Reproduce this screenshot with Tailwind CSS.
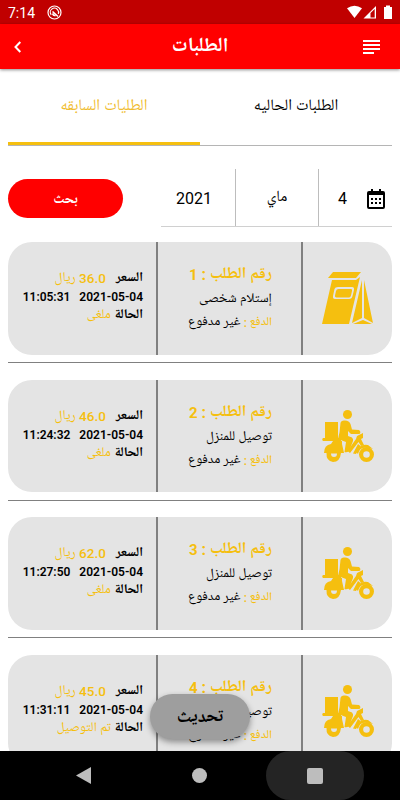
<!DOCTYPE html>
<html lang="ar" dir="rtl">
<head>
    <meta charset="UTF-8">
    <meta name="viewport" content="width=device-width, initial-scale=1.0">
    <title>الطلبات</title>
    <script src="https://cdn.jsdelivr.net/npm/@tailwindcss/browser@4"></script>
</head>
<body class="bg-white text-black font-[Roboto,'Noto_Naskh_Arabic_UI','Noto_Naskh_Arabic','DejaVu_Sans',sans-serif]">
    <div class="relative w-[400px] h-[800px] overflow-hidden flex flex-col">
        <!-- Status bar -->
        <div dir="ltr" class="h-6 shrink-0 bg-[#c00000] text-white flex items-center pl-2 pr-2">
            <span class="text-[14px] leading-6 w-[39px] pt-[2px]">7:14</span>
            <svg class="w-[15px] h-[15px]" viewBox="0 0 15 15" fill="none" stroke="white">
                <circle cx="7.5" cy="7.5" r="6.5" stroke-width="1.2"/>
                <path d="M4.200 9.800A4 4 0 0 1 10.500 4.700A4 4 0 0 1 11.300 9" stroke-width="1.200"/>
                <path d="M5.500 6.500L11 11.500M5.500 8.500Q6 10.500 8.500 10.800" stroke-width="1.600"/>
            </svg>
            <svg class="ml-auto w-[46px] h-[16px]" viewBox="0 0 46 16">
                <path d="M1 4.3Q8.500-.8 16 4.300L8.500 14Z" fill="white"/>
                <path d="M17.500 14.500L30 2V14.500Z" fill="white"/>
                <path d="M24.500 13.500V9L28.700 5V13.500Z" fill="#c00000"/>
                <path d="M38 3h2V1.500h4V3h2v12h-8Z" fill="white"/>
            </svg>
        </div>

        <!-- App bar -->
        <div class="h-[45px] shrink-0 bg-[#ff0000] text-white flex items-center justify-between pr-[20px] pl-[14px] shadow-[0_1px_3px_rgba(0,0,0,0.45)]">
            <svg class="w-[17px] h-[15px] mt-px" viewBox="0 0 17 15" fill="white">
                <path d="M0 0h17v2H0zM0 4h17v2H0zM0 8h17v2H0zM0 12h11v2H0z"/>
            </svg>
            <h1 class="text-[20px] font-bold leading-6 pl-[15px]">الطلبات</h1>
            <svg class="w-[8px] h-[12px] mt-px" viewBox="0 0 8 12" fill="none" stroke="white" stroke-width="2">
                <path d="M6.300 1L1.500 6L6.300 11"/>
            </svg>
        </div>

        <!-- Tabs -->
        <div class="mx-2 h-[77px] shrink-0 flex text-[16px] border-b border-[#b5b5b5]">
            <div class="w-1/2 flex items-center justify-center pb-px">الطلبات الحاليه</div>
            <div class="w-1/2 flex items-center justify-center pt-[2px] text-[#f0bc2e] border-b-[3px] border-[#f5bf0f]">الطليات السابقه</div>
        </div>

        <!-- Date filter -->
        <div class="mx-2 mt-[23px] h-[58px] shrink-0 flex justify-between">
            <div class="w-[231px] flex border-b border-[#d0d0d0] text-[16px]">
                <div class="w-[74px] flex items-center gap-[20px] pr-[7px] pt-[2px] border-l border-[#bdbdbd]">
                    <svg class="w-[18px] h-[20px]" viewBox="0 0 18 20">
                        <path d="M4 0h2v2h6V0h2v2h2q2 0 2 2v14q0 2-2 2H2q-2 0-2-2V4q0-2 2-2h2Z"/>
                        <path d="M2 6h14v12H2Z" fill="white"/>
                        <path d="M4 9h2v2H4zM8 9h2v2H8zM12 9h2v2h-2zM4 13h2v2H4zM8 13h2v2H8zM12 13h2v2h-2z"/>
                    </svg>
                    <span>4</span>
                </div>
                <div class="w-[83px] flex items-center justify-center pt-[3px] text-[15.500px] border-l border-[#bdbdbd]">ماي</div>
                <div class="grow flex items-center justify-center pr-[4px] pt-[2px]"><span class="-ml-1">2021</span></div>
            </div>
            <button class="mt-[10px] pt-[3px] w-[115px] h-[39px] rounded-full bg-[#ff0000] text-white text-[14px] font-bold">بحث</button>
        </div>

        <!-- Orders -->
        <div id="orders" class="mx-2 mt-[15px] grow overflow-hidden"></div>

        <button class="absolute left-[150px] top-[694px] w-[100px] h-[45px] rounded-full bg-[#9e9e9e] pt-[2px] text-[18px] font-bold shadow-[0_3px_6px_rgba(0,0,0,0.4)]">تحديث</button>

        <!-- Navigation bar -->
        <div dir="ltr" class="h-[49px] shrink-0 bg-black flex items-center pl-[76px]">
            <svg class="w-[15px] h-[17px]" viewBox="0 0 15 17" fill="#bdbdbd"><path d="M0 8.500L15 0V17Z"/></svg>
            <div class="ml-[101px] w-[15px] h-[15px] rounded-full bg-[#bdbdbd]"></div>
            <div class="ml-[59px] w-[98px] h-[49px] rounded-full bg-[#242424] flex items-center justify-center">
                <div class="w-4 h-4 rounded-[2px] bg-[#bdbdbd]"></div>
            </div>
        </div>
    </div>

    <script>
        const orders = [
            { id: 1, price: '36.0', time: '11:05:31', type: 'إستلام شخصى', status: 'ملغى', icon: 'bag' },
            { id: 2, price: '46.0', time: '11:24:32', type: 'توصيل للمنزل', status: 'ملغى', icon: 'scooter' },
            { id: 3, price: '62.0', time: '11:27:50', type: 'توصيل للمنزل', status: 'ملغى', icon: 'scooter' },
            { id: 4, price: '45.0', time: '11:31:11', type: 'توصيل للمنزل', status: 'تم التوصيل', icon: 'scooter' }
        ];

        const icons = {
            bag: `
                <svg class="w-[52px] h-[54px]" viewBox="0 0 52 54" fill="#f5bf0f">
                    <path d="M11 1H39L34 7H6Z"/>
                    <path fill-rule="evenodd" d="M10 9H34L38 6L27 53H0ZM16 16Q13 16 12.500 18L11 25Q10.500 28 13 28H27Q30 28 30.500 25L32 19Q32.500 16 30 16ZM16.500 18H29Q30.500 18 30 20L29 24.500Q28.500 26.500 27 26.500H14.500Q12.500 26.500 13 24.500L14 20Q14.500 18 16.500 18Z"/>
                    <path d="M40 9V47L30 52ZM42 9L51 52L42 47ZM41 49L50 53H31Z"/>
                </svg>`,
            scooter: `
                <svg class="w-[52px] h-[52px]" viewBox="0 0 52 52" fill="#f5bf0f">
                    <circle cx="25.500" cy="4.500" r="4.500"/>
                    <path d="M3 12H16V28H19V31H1Q-.5 29.500 1 28H3Z"/>
                    <path d="M18.500 13Q19 10.500 22 10.500Q27 10 28.500 14L30 19.500L37 20Q39.500 22 37.500 24H29L26 21V26L30 27.500Q31.500 29 31 31L27.500 40Q26 43 22.500 42L24 32L16 29Q18 22 18.500 13Z"/>
                    <path d="M11 31H20V34L22 43H19Q18 52 11 52Q4 51 4.500 43H2Q2 35 9 34Z"/>
                    <path d="M9 43.500H15Q15 47 12 47Q9 47 9 43.500Z" fill="#e4e4e4"/>
                    <path d="M35 26L41 23V28L39 29L42 35L39 36L36.500 32L28 43L25.500 41L34 29ZM31 43.500L36 34L38.500 36L34 44Z"/>
                    <path d="M34 42Q38 33 46 35L51 39L47 38Q38 36 36 44Z"/>
                    <circle cx="44.500" cy="44.500" r="5.400" fill="none" stroke="#f5bf0f" stroke-width="4.200"/>
                </svg>`
        };

        document.getElementById('orders').innerHTML = orders.map(order => `
            <div class="h-[137.5px]">
                <div class="h-[112.5px] rounded-[24px] bg-[#e4e4e4] flex overflow-hidden">
                    <div class="w-[89px] flex items-center justify-center pl-[1px]">${icons[order.icon]}</div>
                    <div class="w-[147px] border-x-2 border-[#808080] pr-[29px] pt-[21px] whitespace-nowrap">
                        <div class="h-[24px] leading-6 text-[16px] font-bold text-[#f5bf0f]">رقم الطلب : <span class="text-[15px]">${order.id}</span></div>
                        <div class="h-[24px] leading-6 text-[13.500px]">${order.type}</div>
                        <div class="h-[24px] leading-6 text-[13.300px]"><span class="text-[12px] font-medium text-[#f5bf0f]">الدفع :</span> غير مدفوع</div>
                    </div>
                    <div class="grow pr-[13px] pt-[27px] whitespace-nowrap text-[13.300px] font-bold">
                        <div class="h-[18px] leading-[19px] flex gap-[10px]">
                            <span>السعر</span>
                            <span class="text-[13.500px] font-normal text-[#f5bf0f]"><span class="font-medium">${order.price}</span> ريال</span>
                        </div>
                        <div class="h-[18px] leading-[20px] flex gap-[9px] text-[12px] font-semibold">
                            <span>2021-05-04</span>
                            <span>${order.time}</span>
                        </div>
                        <div class="h-[18px] leading-[21px]">الحالة <span class="font-normal text-[#f5bf0f]">${order.status}</span></div>
                    </div>
                </div>
                <div class="mt-[7.5px] h-px bg-[#808080]"></div>
            </div>
        `).join('');
    </script>
</body>
</html>
